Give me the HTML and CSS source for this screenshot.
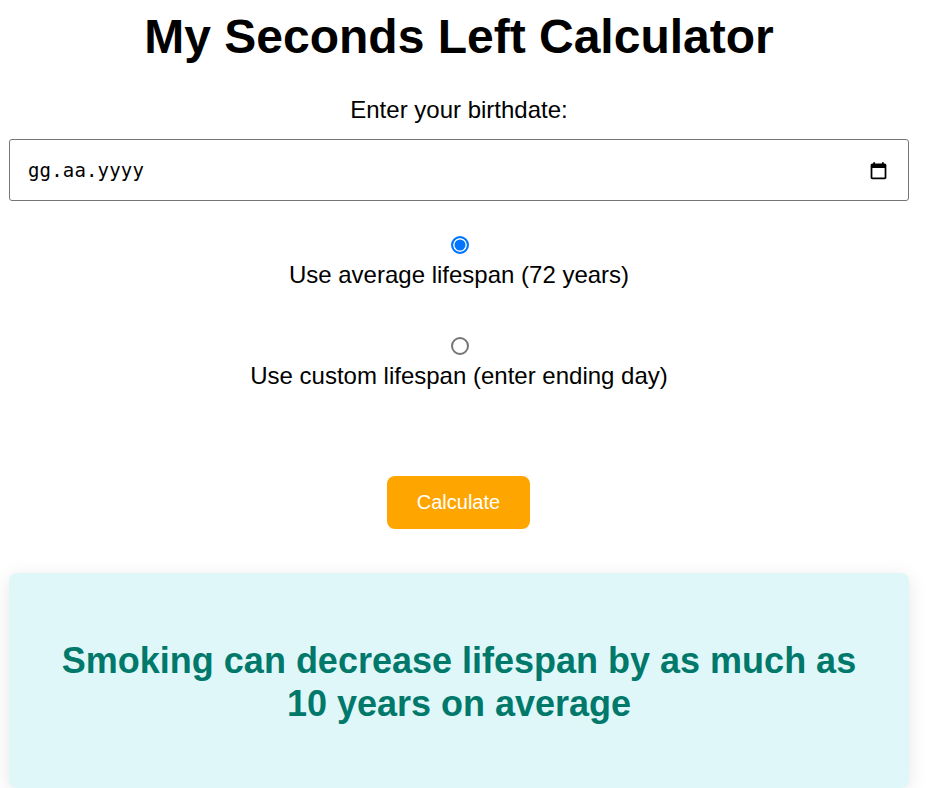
FILE: index.html
```html
<!DOCTYPE html>
<html lang="en">
<head>
<meta charset="utf-8">
<title>My Seconds Left Calculator</title>
<link rel="stylesheet" href="styles.css">
</head>
<body>
<main class="page">
  <h1 class="title">My Seconds Left Calculator</h1>
  <label class="field-label" for="birthdate">Enter your birthdate:</label>
  <div class="date-input" id="birthdate">
    <span class="date-text">gg.aa.yyyy</span>
    <svg class="date-icon" width="24" height="24" viewBox="0 0 24 24" aria-hidden="true"><path d="M19 4h-1V2.5h-2V4H8V2.5H6V4H5C3.9 4 3 4.9 3 6v14c0 1.1.9 2 2 2h14c1.1 0 2-.9 2-2V6c0-1.1-.9-2-2-2zm0 16H5V9h14v11z"/></svg>
  </div>
  <div class="options">
    <label class="option"><input class="radio" type="radio" name="lifespan" checked><span>Use average lifespan (72 years)</span></label>
    <label class="option"><input class="radio" type="radio" name="lifespan"><span>Use custom lifespan (enter ending day)</span></label>
  </div>
  <button class="calculate" type="button">Calculate</button>
  <section class="fact">
    <p class="fact-text">Smoking can decrease lifespan by as much as 10 years on average</p>
  </section>
</main>
</body>
</html>
```
FILE: styles.css
```css
html, body {
  margin: 0;
  padding: 0;
  height: 788px;
  overflow: hidden;
  background: #fff;
}
body {
  font-family: "Liberation Sans", Arial, sans-serif;
  color: #000;
}
.page {
  width: 900px;
  margin-left: 9px;
  display: flex;
  flex-direction: column;
  align-items: center;
}
.title {
  margin: 9px 0 0;
  font-size: 48px;
  line-height: 55px;
  font-weight: 700;
}
.field-label {
  margin-top: 32px;
  font-size: 24px;
  line-height: 27px;
}
.date-input {
  box-sizing: border-box;
  width: 100%;
  height: 62px;
  margin-top: 16px;
  padding: 0 19px 0 18px;
  display: flex;
  align-items: center;
  justify-content: space-between;
  border: 1px solid #767676;
  border-radius: 3px;
}
.date-text {
  font-family: "DejaVu Sans Mono", monospace;
  font-size: 19px;
  letter-spacing: 0.16px;
}
.date-icon {
  display: block;
  width: 21px;
  height: 21px;
}
.options {
  margin-top: 35px;
  display: flex;
  flex-direction: column;
  gap: 49px;
  align-items: center;
}
.option {
  display: flex;
  flex-direction: column;
  align-items: center;
  font-size: 24px;
  line-height: 27px;
}
.radio {
  appearance: none;
  box-sizing: border-box;
  width: 18px;
  height: 18px;
  margin: 0 0 7px 1.5px;
  border: 2px solid #767676;
  border-radius: 50%;
  background: #fff;
}
.radio:checked {
  border-color: #0075ff;
  background: #0075ff;
  box-shadow: inset 0 0 0 1.5px #fff;
}
.calculate {
  margin: 87px 1px 0 0;
  width: 143px;
  height: 53px;
  border: 0;
  border-radius: 8px;
  background: #ffa500;
  color: #fff;
  font-family: inherit;
  font-size: 20px;
  padding: 0;
}
.fact {
  box-sizing: border-box;
  width: 100%;
  height: 215px;
  margin-top: 44px;
  padding: 2px 40px 0;
  display: flex;
  align-items: center;
  justify-content: center;
  background: #e0f7fa;
  border-radius: 8px;
  box-shadow: 0 4px 20px rgba(0, 0, 0, 0.1);
}
.fact-text {
  margin: 0;
  color: #00796b;
  font-size: 36px;
  line-height: 43px;
  font-weight: 700;
  text-align: center;
}
```
